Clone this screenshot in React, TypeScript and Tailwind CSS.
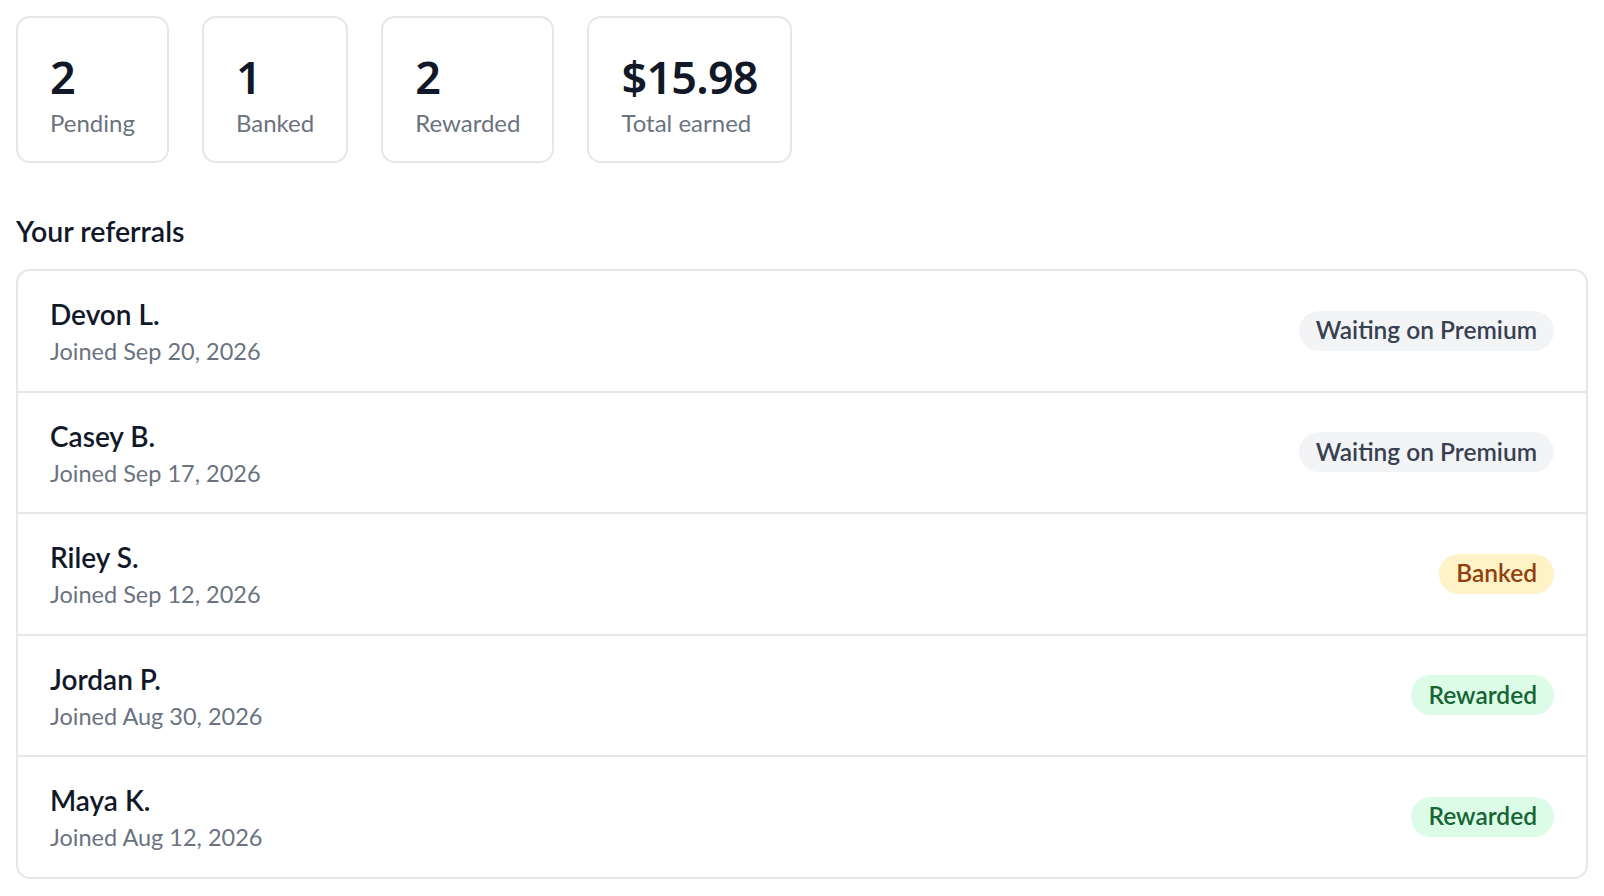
import React from "react";

const stats = [
  { value: "2", label: "Pending" },
  { value: "1", label: "Banked" },
  { value: "2", label: "Rewarded" },
  { value: "$15.98", label: "Total earned" },
];

type Status = "waiting" | "banked" | "rewarded";

const referrals: { name: string; joined: string; status: Status }[] = [
  { name: "Devon L.", joined: "Joined Sep 20, 2026", status: "waiting" },
  { name: "Casey B.", joined: "Joined Sep 17, 2026", status: "waiting" },
  { name: "Riley S.", joined: "Joined Sep 12, 2026", status: "banked" },
  { name: "Jordan P.", joined: "Joined Aug 30, 2026", status: "rewarded" },
  { name: "Maya K.", joined: "Joined Aug 12, 2026", status: "rewarded" },
];

function Badge({ status }: { status: Status }) {
  if (status === "waiting") {
    return (
      <span className="inline-flex h-[40px] items-center rounded-full bg-[#f3f4f6] px-[17px] text-[24.5px] font-semibold text-[#374151]">
        Waiting on Premium
      </span>
    );
  }
  if (status === "banked") {
    return (
      <span className="inline-flex h-[40px] items-center rounded-full bg-[#fef3c7] px-[17px] text-[24.5px] font-semibold text-[#92400e]">
        Banked
      </span>
    );
  }
  return (
    <span className="inline-flex h-[40px] items-center rounded-full bg-[#dcfce7] px-[17px] text-[24.5px] font-semibold text-[#166534]">
      Rewarded
    </span>
  );
}

export default function App() {
  return (
    <div
      className="bg-white p-[16px] text-[#111827]"
      style={{ fontFamily: 'Lato, "Noto Sans", sans-serif' }}
    >
      <div className="flex gap-[33px]">
        {stats.map((s) => (
          <div
            key={s.label}
            className="h-[147px] rounded-[14px] border-2 border-[#e5e7eb] px-[32px] pt-[35px]"
          >
            <div
              className="text-[45px] font-semibold leading-[48px] tracking-[-0.8px] text-[#111827]"
              style={{ fontFamily: '"Noto Sans", sans-serif' }}
            >
              {s.value}
            </div>
            <div className="mt-[6px] text-[24px] leading-[32px] text-[#6b7280]">{s.label}</div>
          </div>
        ))}
      </div>

      <h2 className="mt-[50px] mb-[20px] text-[28.5px] font-semibold leading-[36px] text-[#111827]">
        Your referrals
      </h2>

      <div className="overflow-hidden rounded-[14px] border-2 border-[#e5e7eb]">
        {referrals.map((r, i) => (
          <React.Fragment key={r.name}>
            {i > 0 && <div className="h-[2px] bg-[#e5e7eb]" />}
            <div className="flex h-[119.5px] items-center justify-between px-[32px]">
              <div className="flex h-full flex-col pt-[25px]">
                <div className="text-[28px] font-semibold leading-[36px] text-[#111827]">{r.name}</div>
                <div className="text-[23.5px] leading-[38px] text-[#6b7280]">{r.joined}</div>
              </div>
              <Badge status={r.status} />
            </div>
          </React.Fragment>
        ))}
      </div>
    </div>
  );
}
